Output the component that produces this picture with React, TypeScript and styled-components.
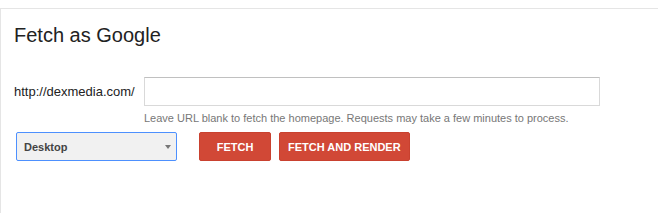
import styled, { createGlobalStyle } from "styled-components";

const GlobalStyle = createGlobalStyle`
  html, body {
    margin: 0;
    padding: 0;
    background: #fff;
    font-family: "Liberation Sans", Arial, sans-serif;
  }
`;

export default function App() {
  return (
    <>
      <GlobalStyle />
      <Stl.Panel>
        <Stl.Title>Fetch as Google</Stl.Title>
        <Stl.Form>
          <Stl.UrlRow>
            <Stl.Prefix>http://dexmedia.com/</Stl.Prefix>
            <Stl.Input type="text" />
          </Stl.UrlRow>
          <Stl.Hint>
            Leave URL blank to fetch the homepage. Requests may take a few
            minutes to process.
          </Stl.Hint>
          <Stl.Actions>
            <Stl.Select>
              <span>Desktop</span>
              <Stl.Arrow />
            </Stl.Select>
            <Stl.Buttons>
              <Stl.Button>FETCH</Stl.Button>
              <Stl.Button>FETCH AND RENDER</Stl.Button>
            </Stl.Buttons>
          </Stl.Actions>
        </Stl.Form>
      </Stl.Panel>
    </>
  );
}

const Stl = {
  Panel: styled.div`
    margin-top: 8px;
    border-top: 1px solid #e5e5e5;
    border-left: 1px solid #e5e5e5;
    padding: 14px 0 0 13px;
    min-height: calc(100vh - 8px);
    box-sizing: border-box;
  `,
  Title: styled.h2`
    margin: 0;
    font-size: 20px;
    line-height: 24px;
    font-weight: 400;
    color: #222;
  `,
  Form: styled.div`
    margin-top: 30px;
  `,
  UrlRow: styled.div`
    display: flex;
    align-items: center;
    gap: 7px;
  `,
  Prefix: styled.label`
    font-size: 13px;
    color: #222;
    width: 123px;
    white-space: nowrap;
  `,
  Input: styled.input`
    box-sizing: border-box;
    width: 456px;
    height: 29px;
    margin: 0;
    border: 1px solid #d9d9d9;
    border-top-color: #c0c0c0;
    border-radius: 0;
    outline: none;
    padding: 0 8px;
    font: 13px "Liberation Sans", Arial, sans-serif;
  `,
  Hint: styled.div`
    margin: 6px 0 0 130px;
    font-size: 11px;
    line-height: 13px;
    color: #777;
  `,
  Actions: styled.div`
    display: flex;
    align-items: center;
    gap: 22px;
    margin: 7px 0 0 2px;
  `,
  Select: styled.div`
    box-sizing: border-box;
    width: 161px;
    height: 29px;
    display: flex;
    align-items: center;
    justify-content: space-between;
    padding: 0 5px 0 7px;
    background: #f1f1f1;
    border: 1px solid #4d90fe;
    border-radius: 2px;
    font-size: 11px;
    font-weight: 700;
    color: #444;
  `,
  Arrow: styled.span`
    width: 0;
    height: 0;
    border-left: 3.5px solid transparent;
    border-right: 3.5px solid transparent;
    border-top: 4px solid #777;
  `,
  Buttons: styled.div`
    display: flex;
    gap: 8px;
  `,
  Button: styled.button`
    box-sizing: border-box;
    min-width: 72px;
    height: 29px;
    padding: 0 8px;
    border: 1px solid #c9412f;
    border-radius: 2px;
    background: #d14836;
    color: #fff;
    font: 700 11px "Liberation Sans", Arial, sans-serif;
    cursor: pointer;
  `,
};
